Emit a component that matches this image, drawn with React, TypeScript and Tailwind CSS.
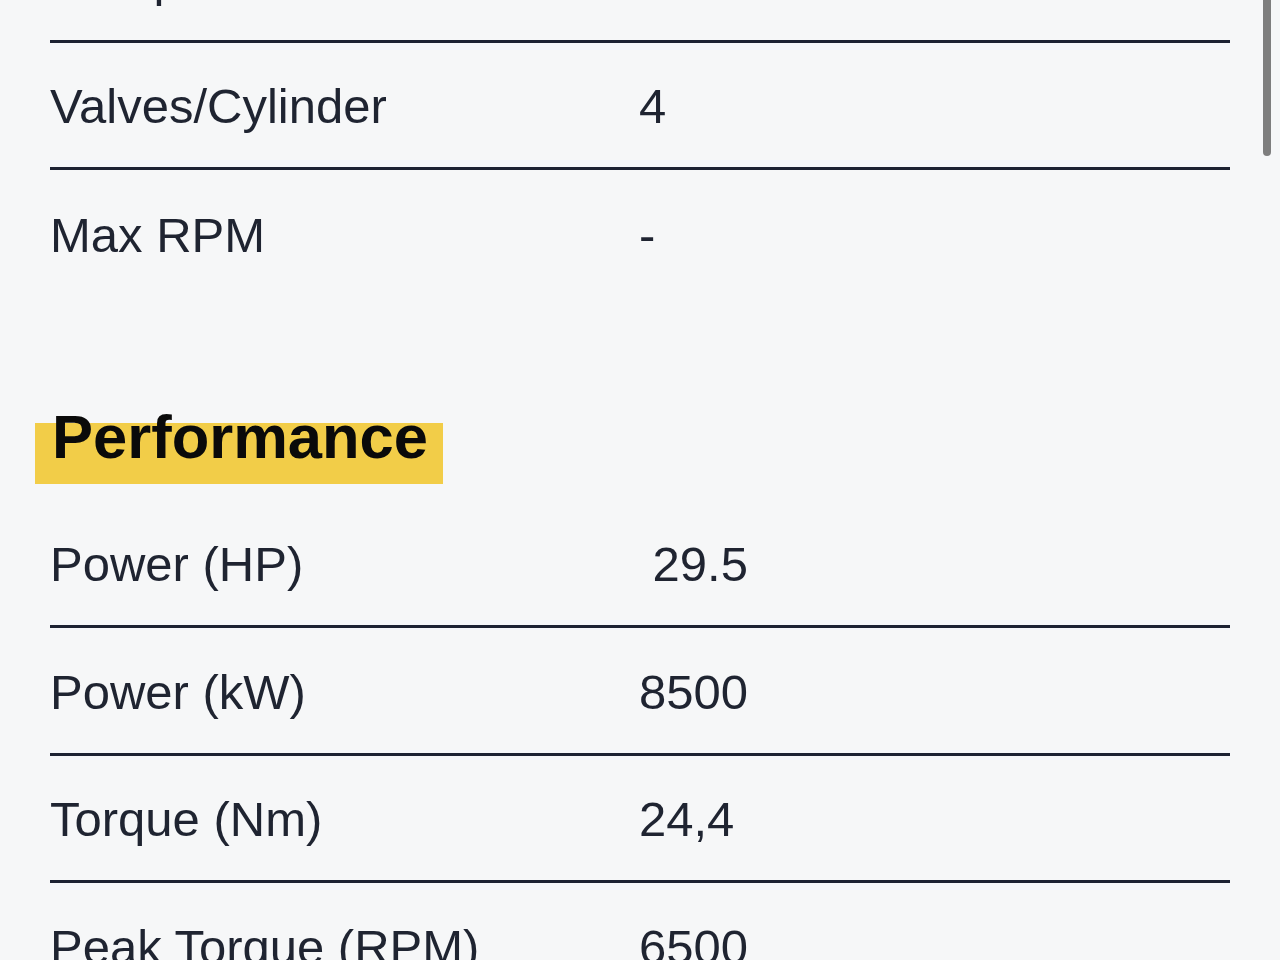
import React from 'react';

type Spec = { label: string; value: string; last?: boolean };

const engine: Spec[] = [
  { label: 'Compression', value: '12:1' },
  { label: 'Valves/Cylinder', value: '4' },
  { label: 'Max RPM', value: '-', last: true },
];

const performance: Spec[] = [
  { label: 'Power (HP)', value: ' 29.5' },
  { label: 'Power (kW)', value: '8500' },
  { label: 'Torque (Nm)', value: '24,4' },
  { label: 'Peak Torque (RPM)', value: '6500' },
  { label: 'Top Speed (km/h)', value: '-', last: true },
];

function SpecRow({ label, value, last }: Spec) {
  return (
    <div
      className={`grid grid-cols-[589px_1fr] items-center h-[127.5px] pt-[4px] ${
        last ? '' : 'border-b-[3px] border-[#1d2231]'
      }`}
    >
      <span>{label}</span>
      <span className="whitespace-pre">{value}</span>
    </div>
  );
}

export default function App() {
  return (
    <div className="relative w-full h-screen overflow-hidden bg-[#f6f7f8] font-['Liberation_Sans',Arial,sans-serif] text-[#1f2431]">
      <div className="px-[50px] -mt-[85px] text-[49px]">
        {/* Engine section (tail end) */}
        {engine.map(s => (
          <SpecRow key={s.label} {...s} />
        ))}

        {/* Performance section */}
        <h2 className="mt-[108px] -ml-[15px] inline-block pl-[17px] pr-[15px] pb-[16.5px] text-[61.5px] leading-[62px] font-bold text-[#0a0a0a] bg-[linear-gradient(to_bottom,transparent_17.5px,#f2cd48_17.5px)]">
          Performance
        </h2>
        <div className="mt-[16.5px]">
          {performance.map(s => (
            <SpecRow key={s.label} {...s} />
          ))}
        </div>
      </div>

      {/* overlay scrollbar */}
      <div className="absolute right-[9px] -top-[40px] h-[196px] w-[8px] rounded-full bg-[#7e7e7e]" />
    </div>
  );
}
